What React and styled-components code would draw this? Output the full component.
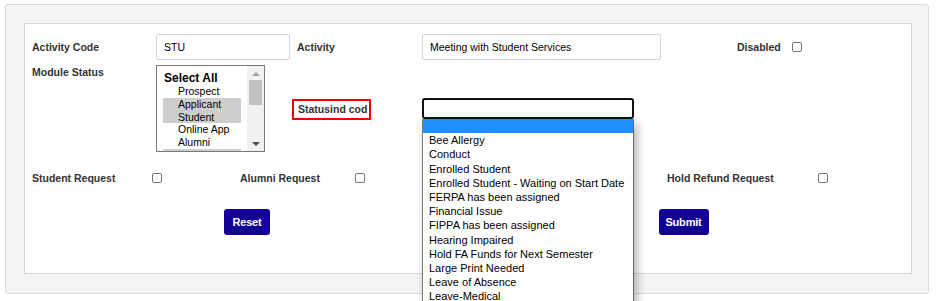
import React from "react";
import styled, { createGlobalStyle } from "styled-components";

const GlobalStyle = createGlobalStyle`
  html, body { margin: 0; padding: 0; background: #fff; }
  body { font-family: "Liberation Sans", Arial, sans-serif; }
  * { box-sizing: border-box; }
`;

const Page = styled.div`
  padding: 4px 0 0 5px;
  min-height: 340px;
`;

const Panel = styled.div`
  width: 924px;
  background: #f4f4f4;
  border: 1px solid #dadada;
  border-radius: 3px;
  padding: 18px 16px 19px 18px;
`;

const Card = styled.div`
  position: relative;
  background: #fff;
  border: 1px solid #d6d6d6;
  padding: 10px 0 38px 7px;
`;

const Row = styled.div`
  display: flex;
  align-items: ${(p) => p.$align || "center"};
  margin-top: ${(p) => p.$mt || 0}px;
`;

const Label = styled.div`
  width: ${(p) => p.$w}px;
  flex: none;
  font-size: 10.5px;
  font-weight: bold;
  color: #333;
  line-height: 13px;
  padding-top: ${(p) => p.$pt || 0}px;
  white-space: nowrap;
`;

const TextInput = styled.div`
  width: ${(p) => p.$w}px;
  height: 26px;
  margin-right: ${(p) => p.$mr || 0}px;
  flex: none;
  border: 1px solid #d3d3d3;
  border-radius: 2px;
  padding: 0 7px;
  display: flex;
  align-items: center;
  font-size: 10.5px;
  color: #000;
`;

const Spacer = styled.div`
  width: ${(p) => p.$w}px;
  flex: none;
`;

const Check = styled.span`
  display: block;
  flex: none;
  width: 10px;
  height: 10px;
  border: 1px solid #767676;
  border-radius: 2px;
  background: #fff;
`;

const ListBox = styled.div`
  width: 109px;
  height: 87px;
  flex: none;
  border: 1px solid #7a7a7a;
  display: flex;
  overflow: hidden;
  background: #fff;
`;

const OptionsArea = styled.div`
  width: 91px;
  padding: 5px 6px 0 6px;
  overflow: hidden;
`;

const GroupLabel = styled.div`
  height: 14px;
  line-height: 14px;
  font-size: 12px;
  font-weight: bold;
  color: #000;
  padding-left: 1px;
  white-space: nowrap;
`;

const Option = styled.div`
  height: 12.8px;
  line-height: 12.8px;
  font-size: 10.5px;
  color: #000;
  padding-left: 15px;
  white-space: nowrap;
  background: ${(p) => (p.$selected ? "#cecece" : "transparent")};
`;

const Scrollbar = styled.div`
  width: 17px;
  flex: none;
  background: #f1f1f1;
  display: flex;
  flex-direction: column;
  align-items: center;
  padding: 6px 0 5px;
`;

const Arrow = styled.div`
  width: 0;
  height: 0;
  border-left: 4px solid transparent;
  border-right: 4px solid transparent;
  ${(p) =>
    p.$down
      ? "border-top: 4px solid #505050; margin-top: auto;"
      : "border-bottom: 4px solid #a3a3a3;"}
`;

const Thumb = styled.div`
  width: 13px;
  height: 25px;
  margin-top: 4px;
  background: #c1c1c1;
`;

const StatusGroup = styled.div`
  display: flex;
  align-items: flex-start;
  margin-left: 27px;
  margin-top: 33px;
`;

const RedBox = styled.div`
  width: 79px;
  height: 21px;
  margin-top: 1px;
  border: 2px solid #f20000;
  padding: 0 4px;
  font-size: 10.5px;
  font-weight: bold;
  color: #333;
  line-height: 17px;
  white-space: nowrap;
`;

const SelectWrap = styled.div`
  position: relative;
  margin-left: 51px;
  width: 212px;
  height: 21px;
`;

const SelectBox = styled.div`
  width: 100%;
  height: 100%;
  border: 2px solid #101010;
  border-radius: 3px;
  background: #fff;
`;

const Dropdown = styled.div`
  position: absolute;
  left: 0;
  top: 100%;
  width: 212px;
  z-index: 10;
  background: #fff;
  border: 1px solid #7d7d7d;
  border-top: none;
  border-right-color: #6a6a6a;
  box-shadow: 3px 4px 9px rgba(0, 0, 0, 0.3);
`;

const DropItem = styled.div`
  height: 14.2px;
  line-height: 14.2px;
  font-size: 11px;
  color: #000;
  padding-left: 6px;
  white-space: nowrap;
  background: ${(p) => (p.$active ? "#1e90ff" : "#fff")};
`;

const CheckCell = styled.div`
  width: ${(p) => p.$w}px;
  flex: none;
  display: flex;
  align-items: center;
`;

const ButtonRow = styled.div`
  display: grid;
  grid-template-columns: 430px 443px;
  justify-items: center;
  margin-top: 24px;
`;

const Button = styled.button`
  width: ${(p) => p.$w}px;
  height: 26px;
  padding: 0;
  border: none;
  border-radius: 3px;
  background: #120096;
  color: #fff;
  font-family: "Liberation Sans", Arial, sans-serif;
  font-size: 11px;
  font-weight: bold;
  letter-spacing: -0.2px;
  cursor: pointer;
`;

const statuses = [
  "",
  "Bee Allergy",
  "Conduct",
  "Enrolled Student",
  "Enrolled Student - Waiting on Start Date",
  "FERPA has been assigned",
  "Financial Issue",
  "FIPPA has been assigned",
  "Hearing Impaired",
  "Hold FA Funds for Next Semester",
  "Large Print Needed",
  "Leave of Absence",
  "Leave-Medical",
  "Medical Alert",
];

const modules = [
  { name: "Prospect" },
  { name: "Applicant", selected: true },
  { name: "Student", selected: true },
  { name: "Online App" },
  { name: "Alumni" },
  { name: "Faculty", selected: true },
];

export default function App() {
  return (
    <>
      <GlobalStyle />
      <Page>
        <Panel>
          <Card>
            <Row>
              <Label $w={124}>Activity Code</Label>
              <TextInput $w={134} $mr={7}>STU</TextInput>
              <Label $w={125}>Activity</Label>
              <TextInput $w={239}>Meeting with Student Services</TextInput>
              <Spacer $w={76} />
              <Label $w={55}>Disabled</Label>
              <Check />
            </Row>

            <Row $align="flex-start" $mt={5}>
              <Label $w={124} $pt={1}>Module Status</Label>
              <ListBox>
                <OptionsArea>
                  <GroupLabel>Select All</GroupLabel>
                  {modules.map((m) => (
                    <Option key={m.name} $selected={m.selected}>
                      {m.name}
                    </Option>
                  ))}
                </OptionsArea>
                <Scrollbar>
                  <Arrow />
                  <Thumb />
                  <Arrow $down />
                </Scrollbar>
              </ListBox>
              <StatusGroup>
                <RedBox>Statusind cod</RedBox>
                <SelectWrap>
                  <SelectBox />
                  <Dropdown>
                    {statuses.map((s, i) => (
                      <DropItem key={i} $active={i === 0}>
                        {s}
                      </DropItem>
                    ))}
                  </Dropdown>
                </SelectWrap>
              </StatusGroup>
            </Row>

            <Row $mt={19}>
              <CheckCell $w={208}>
                <Label $w={120} $pt={1}>Student Request</Label>
                <Check />
              </CheckCell>
              <CheckCell $w={208}>
                <Label $w={115} $pt={1}>Alumni Request</Label>
                <Check />
              </CheckCell>
              <Spacer $w={219} />
              <CheckCell $w={200}>
                <Label $w={151} $pt={1}>Hold Refund Request</Label>
                <Check />
              </CheckCell>
            </Row>

            <ButtonRow>
              <Button $w={46}>Reset</Button>
              <Button $w={50}>Submit</Button>
            </ButtonRow>
          </Card>
        </Panel>
      </Page>
    </>
  );
}
